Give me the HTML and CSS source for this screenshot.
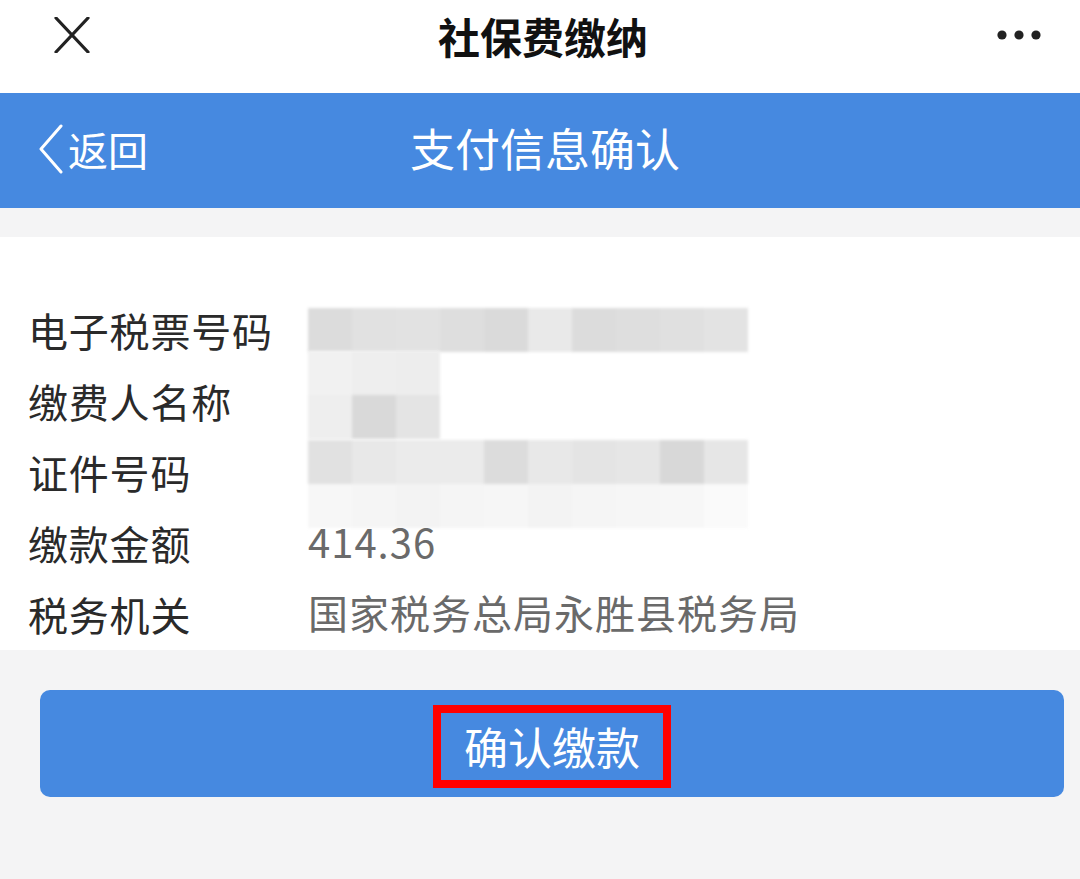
FILE: index.html
```html
<!DOCTYPE html>
<html lang="zh-CN">
<head>
<meta charset="UTF-8" />
<meta name="viewport" content="width=device-width, initial-scale=1" />
<title>社保费缴纳</title>
<link rel="stylesheet" href="styles.css">
</head>
<body>

<header class="topbar">
  <svg class="close-icon" width="36" height="36" viewBox="0 0 36 36">
    <path d="M2 1 L34 35 M34 1 L2 35" stroke="#222" stroke-width="3.2" fill="none" stroke-linecap="round" />
  </svg>
  <h1 class="topbar-title">社保费缴纳</h1>
  <svg class="more-icon" width="46" height="12" viewBox="0 0 46 12">
    <circle cx="5" cy="6" r="4.6" fill="#222" />
    <circle cx="22" cy="6" r="4.6" fill="#222" />
    <circle cx="39" cy="6" r="4.6" fill="#222" />
  </svg>
</header>

<nav class="navbar">
  <a class="back" href="#">
    <svg class="back-icon" width="26" height="50" viewBox="0 0 26 50">
      <path d="M23 2 L3 25 L23 48" stroke="#fff" stroke-width="3" fill="none" stroke-linecap="round" stroke-linejoin="round" />
    </svg>
    <span>返回</span>
  </a>
  <div class="navbar-title">支付信息确认</div>
</nav>

<div class="spacer"></div>

<section class="card">
  <div class="row">
    <div class="label">电子税票号码</div>
    <div class="value">
      <div class="mosaic mosaic-wide">
        <i style="background:#dcdcdc"></i><i style="background:#e1e1e1"></i><i style="background:#e2e2e2"></i><i style="background:#dedede"></i><i style="background:#dadada"></i><i style="background:#e9e9e9"></i><i style="background:#dcdcdc"></i><i style="background:#dedede"></i><i style="background:#e0e0e0"></i><i style="background:#e3e3e3"></i>
      </div>
    </div>
  </div>
  <div class="row">
    <div class="label">缴费人名称</div>
    <div class="value">
      <div class="mosaic mosaic-name">
        <i style="background:#f1f1f1"></i><i style="background:#eeeeee"></i><i style="background:#ededed"></i>
        <i style="background:#eeeeee"></i><i style="background:#d9d9d9"></i><i style="background:#e4e4e4"></i>
      </div>
    </div>
  </div>
  <div class="row">
    <div class="label">证件号码</div>
    <div class="value">
      <div class="mosaic mosaic-id">
        <i style="background:#e1e1e1"></i><i style="background:#e8e8e8"></i><i style="background:#ebebeb"></i><i style="background:#ebebeb"></i><i style="background:#dcdcdc"></i><i style="background:#e8e8e8"></i><i style="background:#e4e4e4"></i><i style="background:#e6e6e6"></i><i style="background:#d8d8d8"></i><i style="background:#e6e6e6"></i>
        <i style="background:#f7f7f7"></i><i style="background:#f5f5f5"></i><i style="background:#f3f3f3"></i><i style="background:#f5f5f5"></i><i style="background:#f6f6f6"></i><i style="background:#f3f3f3"></i><i style="background:#f5f5f5"></i><i style="background:#f6f6f6"></i><i style="background:#f7f7f7"></i><i style="background:#fafafa"></i>
      </div>
    </div>
  </div>
  <div class="row">
    <div class="label">缴款金额</div>
    <div class="value">414.36</div>
  </div>
  <div class="row">
    <div class="label">税务机关</div>
    <div class="value">国家税务总局永胜县税务局</div>
  </div>
</section>

<footer class="actions">
  <button class="confirm" type="button"><span class="mark">确认缴款</span></button>
</footer>

</body>
</html>
```

FILE: styles.css
```css
body {
  margin: 0;
  width: 1080px;
  min-height: 879px;
  background: #f4f4f5;
  font-family: "Noto Sans CJK SC", "Noto Sans", sans-serif;
  color: #222;
}
.topbar {
  position: relative;
  height: 93px;
  background: #fff;
  display: flex;
  align-items: center;
  justify-content: center;
}
.topbar-title {
  margin: 0;
  font-size: 42px;
  font-weight: bold;
  color: #111;
  line-height: 1;
  margin-left: 6px;
  margin-top: -22px;
}
.close-icon {
  position: absolute;
  left: 54px;
  top: 17px;
}
.more-icon {
  position: absolute;
  left: 997px;
  top: 29px;
}
.navbar {
  position: relative;
  height: 115px;
  background: #4689e0;
  display: flex;
  align-items: center;
  justify-content: center;
  color: #fff;
}
.navbar-title {
  font-size: 45px;
  line-height: 1;
  margin-left: 10px;
  margin-top: -6px;
}
.back {
  position: absolute;
  left: 38px;
  top: 31px;
  display: flex;
  align-items: center;
  color: #fff;
  text-decoration: none;
  font-size: 40px;
  line-height: 1;
}
.back-icon {
  margin-right: 4px;
}
.spacer {
  height: 29px;
  background: #f4f4f5;
}
.card {
  background: #fff;
  padding: 57px 0 0 28px;
  height: 356px;
}
.row {
  display: flex;
  align-items: center;
  height: 71px;
}
.label {
  width: 280px;
  font-size: 40px;
  letter-spacing: 0.8px;
  color: #2a2a2a;
  line-height: 1;
}
.value {
  font-size: 40px;
  letter-spacing: 1px;
  color: #6a6a6a;
  line-height: 1;
  position: relative;
  height: 44px;
}
.mosaic {
  display: grid;
  grid-template-columns: repeat(10, 44px);
  grid-auto-rows: 44px;
  filter: blur(1.5px);
}
.mosaic i {
  display: block;
}
.mosaic-name {
  grid-template-columns: repeat(3, 44px);
  margin-top: -28px;
}
.mosaic-id {
  margin-top: -10px;
}
.actions {
  padding: 40px 16px 0 40px;
}
.confirm {
  width: 1024px;
  height: 107px;
  border: none;
  border-radius: 10px;
  background: #4689e0;
  color: #fff;
  font-family: inherit;
  font-size: 44px;
  display: flex;
  align-items: center;
  justify-content: center;
  padding: 0;
}
.mark {
  display: inline-block;
  border: 8px solid #f00;
  height: 67px;
  line-height: 67px;
  padding: 0 23px 0 23px;
  margin-top: 6px;
}
```
